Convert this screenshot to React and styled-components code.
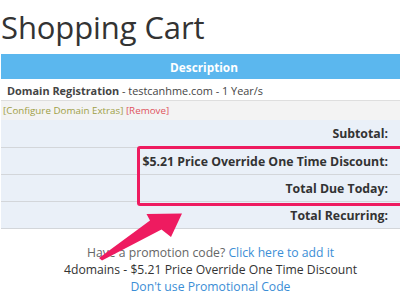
import React from "react";
import styled, { createGlobalStyle } from "styled-components";

const Global = createGlobalStyle`
  html, body { margin: 0; padding: 0; background: #fff; overflow: hidden; }
  body { font-family: "Open Sans", "Liberation Sans", sans-serif; color: #333; }
`;

const Page = styled.div`
  position: relative;
  width: 400px;
  height: 300px;
  overflow: hidden;
  padding: 5px 0 0 1px;
  box-sizing: border-box;
`;

const Title = styled.h1`
  margin: 0;
  font-size: 31px;
  line-height: 44px;
  font-weight: 400;
  color: #333;
  letter-spacing: -0.1px;
`;

const Table = styled.table`
  margin-top: 5px;
  width: 406px;
  border-collapse: collapse;
`;

const Head = styled.th`
  background: #5bb7ee;
  color: #fff;
  font-weight: 700;
  font-size: 11.8px;
  height: 25px;
  padding: 0;
  text-align: center;
`;

const ItemCell = styled.td`
  background: #fff;
  height: 20px;
  padding: 1px 0 0 6px;
  border-bottom: 1px solid #dedede;
  white-space: nowrap;
  font-size: 10.9px;
  color: #444;
`;

const ConfigCell = styled.td`
  background: #f3f3f3;
  height: 19px;
  padding: 0 0 0 2px;
  font-size: 9.8px;
  white-space: nowrap;
`;

const Extra = styled.span`
  color: ${(p) => (p.$danger ? "#e0545e" : "#a0a046")};
`;

const TotalCell = styled.td`
  background: #eaf0f8;
  height: ${(p) => (p.$first ? 27 : 26)}px;
  padding: 0 19px 0 0;
  border-bottom: 1px solid #d3d6da;
  text-align: right;
  font-size: 12.3px;
  font-weight: 700;
  color: #333;
  white-space: nowrap;
`;

const Promo = styled.div`
  margin-top: 15px;
  padding-left: 20px;
  text-align: center;
  font-size: 12.2px;
  line-height: 17px;
  color: #333;
`;

const Line = styled.div`
  color: ${(p) => p.$color || "#333"};
  white-space: nowrap;
`;

const Link = styled.a`
  color: #3b8ed6;
  text-decoration: none;
`;

const Highlight = styled.div`
  position: absolute;
  left: 137px;
  top: 146px;
  width: 300px;
  height: 60px;
  box-sizing: border-box;
  border: 3px solid #ee1b60;
  border-radius: 3px;
  pointer-events: none;
`;

const Overlay = styled.svg`
  position: absolute;
  left: 0;
  top: 0;
  pointer-events: none;
`;

const totals = [
  "Subtotal:",
  "$5.21 Price Override One Time Discount:",
  "Total Due Today:",
  "Total Recurring:",
];

export default function App() {
  return (
    <>
      <Global />
      <Page>
        <Title>Shopping Cart</Title>
        <Table>
          <thead>
            <tr>
              <Head>Description</Head>
            </tr>
          </thead>
          <tbody>
            <tr>
              <ItemCell>
                <strong>Domain Registration</strong> - testcanhme.com - 1 Year/s
              </ItemCell>
            </tr>
            <tr>
              <ConfigCell>
                <Extra>[Configure Domain Extras]</Extra> <Extra $danger>[Remove]</Extra>
              </ConfigCell>
            </tr>
            {totals.map((t, i) => (
              <tr key={t}>
                <TotalCell $first={i === 0}>{t}</TotalCell>
              </tr>
            ))}
          </tbody>
        </Table>
        <Promo>
          <Line $color="#666">
            Have a promotion code? <Link href="#">Click here to add it</Link>
          </Line>
          <Line>4domains - $5.21 Price Override One Time Discount</Line>
          <Line>
            <Link href="#">Don't use Promotional Code</Link>
          </Line>
        </Promo>
        <Highlight />
        <Overlay width="400" height="300" viewBox="0 0 400 300">
          <polygon
            points="99,258 150,220.5 146.5,214 182,213.5 171,237 161.5,229.5 102,260.5"
            fill="#ee1b60"
          />
        </Overlay>
      </Page>
    </>
  );
}
